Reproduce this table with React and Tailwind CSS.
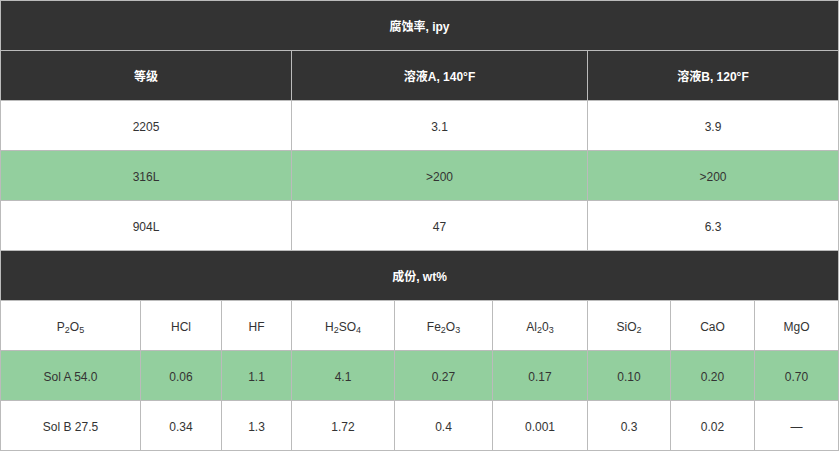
import React from 'react';

const font = { fontFamily: '"Liberation Sans", "Noto Sans CJK SC", Arial, sans-serif' };

const Head = ({ span = '', children }) => (
  <div className={`${span} h-[49px] pt-[3px] bg-[#333333] text-white font-bold text-[12px] flex items-center justify-center`}>
    {children}
  </div>
);

const Cell = ({ span = '', green, children }) => (
  <div className={`${span} h-[49px] pt-[2px] ${green ? 'bg-[#93cf9e]' : 'bg-white'} text-[#333333] text-[12px] flex items-center justify-center`}>
    {children}
  </div>
);

const App = () => (
  <div style={font} className="w-[839px] h-[451px] bg-white">
    <div className="grid grid-cols-[139px_80px_69px_102px_97px_94px_82px_83px_83px] gap-px p-px bg-[#bbbbbb] w-[839px]">
      <Head span="col-span-9">腐蚀率, ipy</Head>

      <Head span="col-span-3">等级</Head>
      <Head span="col-span-3">溶液A, 140°F</Head>
      <Head span="col-span-3">溶液B, 120°F</Head>

      <Cell span="col-span-3">2205</Cell>
      <Cell span="col-span-3">3.1</Cell>
      <Cell span="col-span-3">3.9</Cell>

      <Cell span="col-span-3" green>316L</Cell>
      <Cell span="col-span-3" green>&gt;200</Cell>
      <Cell span="col-span-3" green>&gt;200</Cell>

      <Cell span="col-span-3">904L</Cell>
      <Cell span="col-span-3">47</Cell>
      <Cell span="col-span-3">6.3</Cell>

      <Head span="col-span-9">成份, wt%</Head>

      <Cell><span>P<sub>2</sub>O<sub>5</sub></span></Cell>
      <Cell>HCl</Cell>
      <Cell>HF</Cell>
      <Cell><span>H<sub>2</sub>SO<sub>4</sub></span></Cell>
      <Cell><span>Fe<sub>2</sub>O<sub>3</sub></span></Cell>
      <Cell><span>Al<sub>2</sub>0<sub>3</sub></span></Cell>
      <Cell><span>SiO<sub>2</sub></span></Cell>
      <Cell>CaO</Cell>
      <Cell>MgO</Cell>

      <Cell green>Sol A 54.0</Cell>
      <Cell green>0.06</Cell>
      <Cell green>1.1</Cell>
      <Cell green>4.1</Cell>
      <Cell green>0.27</Cell>
      <Cell green>0.17</Cell>
      <Cell green>0.10</Cell>
      <Cell green>0.20</Cell>
      <Cell green>0.70</Cell>

      <Cell>Sol B 27.5</Cell>
      <Cell>0.34</Cell>
      <Cell>1.3</Cell>
      <Cell>1.72</Cell>
      <Cell>0.4</Cell>
      <Cell>0.001</Cell>
      <Cell>0.3</Cell>
      <Cell>0.02</Cell>
      <Cell>—</Cell>
    </div>
  </div>
);

export default App;
